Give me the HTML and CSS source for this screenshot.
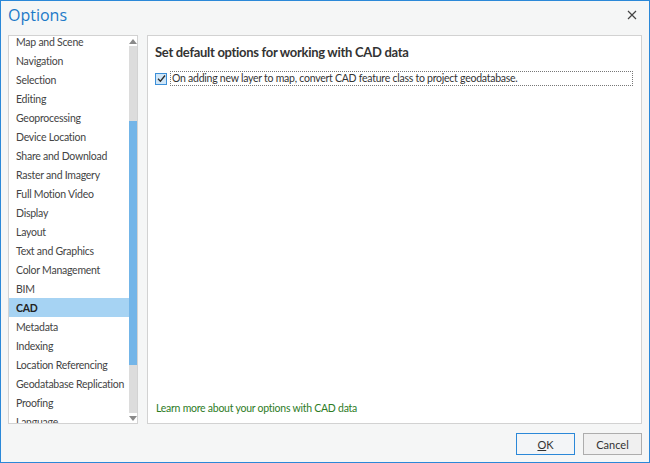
FILE: index.html
```html
<!DOCTYPE html>
<html>
<head>
<meta charset="utf-8">
<link rel="stylesheet" href="styles.css">
</head>
<body>
<div class="window">
  <div class="titlebar">
    <span class="title">Options</span>
    <span class="close"><svg width="10" height="10" viewBox="0 0 10 10"><path d="M1 1 L9 9 M9 1 L1 9" stroke="#444" stroke-width="1.2" fill="none"/></svg></span>
  </div>
  <div class="content">
    <div class="listpanel">
      <div class="listwrap">
        <ul class="list">
          <li>Map and Scene</li>
          <li>Navigation</li>
          <li>Selection</li>
          <li>Editing</li>
          <li>Geoprocessing</li>
          <li>Device Location</li>
          <li>Share and Download</li>
          <li>Raster and Imagery</li>
          <li>Full Motion Video</li>
          <li>Display</li>
          <li>Layout</li>
          <li>Text and Graphics</li>
          <li>Color Management</li>
          <li>BIM</li>
          <li class="selected">CAD</li>
          <li>Metadata</li>
          <li>Indexing</li>
          <li>Location Referencing</li>
          <li>Geodatabase Replication</li>
          <li>Proofing</li>
          <li>Language</li>
        </ul>
      </div>
      <div class="scrollbar">
        <div class="arrow up"></div>
        <div class="track"><div class="thumb"></div></div>
        <div class="arrow down"></div>
      </div>
    </div>
    <div class="mainpanel">
      <h1 class="heading">Set default options for working with CAD data</h1>
      <label class="option">
        <span class="checkbox"><svg width="9" height="9" viewBox="0 0 9 9"><path d="M1 4.8 L3.4 7.2 L8 1.5" stroke="#2a2a2a" stroke-width="1.3" fill="none"/></svg></span>
        <span class="optlabel">On adding new layer to map, convert CAD feature class to project geodatabase.</span>
      </label>
      <div class="spacer"></div>
      <a class="learn">Learn more about your options with CAD data</a>
    </div>
  </div>
  <div class="footer">
    <button class="btn ok"><u>O</u>K</button>
    <button class="btn">Cancel</button>
  </div>
</div>
</body>
</html>
```
FILE: styles.css
```css
* { box-sizing: border-box; }
html, body { margin: 0; padding: 0; }
body {
  font-family: Lato, "Noto Sans", sans-serif;
  font-size: 10.5px;
  letter-spacing: -0.25px;
  color: #333;
  background: #fff;
}
.window {
  width: 650px;
  height: 463px;
  border: 1px solid #2b88d8;
  background: #f5f6f6;
  display: flex;
  flex-direction: column;
}
.titlebar {
  height: 34px;
  display: flex;
  align-items: flex-start;
  justify-content: space-between;
  padding: 3px 12px 0 7px;
}
.title {
  font-family: "Open Sans", "Noto Sans", sans-serif;
  font-size: 16px;
  letter-spacing: 0;
  color: #1c7ac8;
  line-height: 22px;
}
.close {
  margin-top: 6px;
  width: 10px;
  height: 10px;
  display: flex;
}
.content {
  display: flex;
  gap: 9px;
  padding: 0 7px 0 7px;
  height: 389px;
}
.listpanel {
  width: 130px;
  border: 1px solid #d2d2d2;
  background: #fff;
  display: flex;
}
.listwrap {
  flex: 1;
  overflow: hidden;
}
.list {
  list-style: none;
  margin: -4px 0 0 0;
  padding: 0;
}
.list li {
  height: 19px;
  line-height: 17px;
  padding-top: 2px;
  padding-left: 7px;
  color: #444;
  white-space: nowrap;
}
.list li.selected {
  background: #a6d3f3;
  font-weight: bold;
  color: #222;
}
.scrollbar {
  width: 8px;
  display: flex;
  flex-direction: column;
}
.arrow {
  height: 10px;
  display: flex;
  align-items: center;
  justify-content: center;
}
.arrow.up::before {
  content: "";
  border-left: 4px solid transparent;
  border-right: 4px solid transparent;
  border-bottom: 5px solid #8a8a8a;
}
.arrow.down::before {
  content: "";
  border-left: 4px solid transparent;
  border-right: 4px solid transparent;
  border-top: 5px solid #8a8a8a;
}
.track {
  flex: 1;
  background: #dcdcdc;
  padding-top: 75px;
  padding-bottom: 48px;
  display: flex;
}
.thumb {
  flex: 1;
  background: #73b5e8;
}
.mainpanel {
  flex: 1;
  border: 1px solid #d2d2d2;
  background: #fff;
  display: flex;
  flex-direction: column;
  padding: 6px 8px 6px 7px;
}
.heading {
  margin: 0;
  font-size: 13px;
  letter-spacing: -0.3px;
  font-weight: bold;
  color: #333;
  line-height: 20px;
}
.option {
  display: flex;
  align-items: center;
  margin-top: 9px;
  height: 15px;
}
.checkbox {
  width: 12px;
  height: 12px;
  border: 1px solid #3c8fd8;
  background: #cfe6f8;
  display: flex;
  align-items: center;
  justify-content: center;
  margin-right: 3px;
}
.optlabel {
  flex: 1;
  border: 1px dotted #777;
  line-height: 13px;
  padding-left: 1px;
  color: #333;
}
.spacer { flex: 1; }
.learn {
  color: #2e7c1f;
  line-height: 18px;
  padding-left: 1px;
}
.footer {
  flex: 1;
  display: flex;
  justify-content: flex-end;
  align-items: flex-start;
  gap: 8px;
  padding: 9px 7px 0 0;
}
.btn {
  width: 59px;
  height: 22px;
  font-family: Lato, "Noto Sans", sans-serif;
  font-size: 11px;
  color: #333;
  background: #f0f0f0;
  border: 1px solid #adadad;
  padding: 0;
}
.btn.ok {
  border: 1px solid #2b88d8;
  background: #f3f5f7;
}
```
